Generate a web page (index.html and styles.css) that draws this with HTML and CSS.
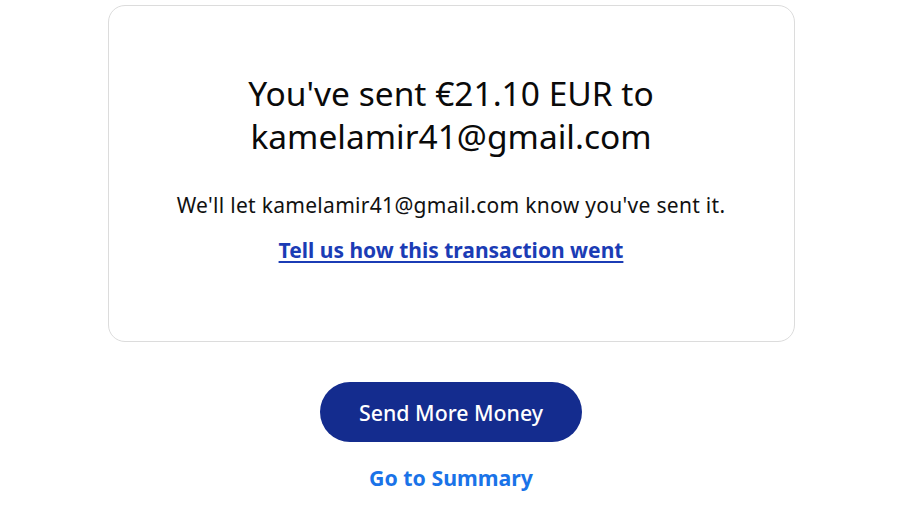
FILE: index.html
```html
<!DOCTYPE html>
<html lang="en">
<head>
<meta charset="utf-8">
<title>Money sent</title>
<link rel="stylesheet" href="styles.css">
</head>
<body>
<main class="page">
  <section class="card">
    <h1 class="title">You've sent €21.10 EUR to<br>kamelamir41@gmail.com</h1>
    <p class="note">We'll let kamelamir41@gmail.com know you've sent it.</p>
    <a class="feedback" href="#">Tell us how this transaction went</a>
  </section>
  <div class="actions">
    <a class="btn-primary" href="#">Send More Money</a>
    <a class="link-secondary" href="#">Go to Summary</a>
  </div>
</main>
</body>
</html>
```
FILE: styles.css
```css
* { box-sizing: border-box; }
html, body { margin: 0; padding: 0; background: #fff; }
body {
  font-family: "Noto Sans", "Open Sans", sans-serif;
  color: #001435;
}
.page {
  width: 902px;
  display: flex;
  flex-direction: column;
  align-items: center;
  padding-top: 5px;
}
.card {
  width: 687px;
  height: 337px;
  border: 1px solid #dcdcdc;
  border-radius: 17px;
  padding-top: 66px;
  display: flex;
  flex-direction: column;
  align-items: center;
  text-align: center;
}
.title {
  margin: 0;
  font-size: 33.5px;
  line-height: 43px;
  font-weight: 400;
  color: #0a0a0a;
}
.note {
  margin: 33px 0 0;
  font-size: 21px;
  line-height: 28px;
  letter-spacing: 0.3px;
  color: #111;
}
.feedback {
  margin-top: 17px;
  font-size: 21px;
  line-height: 28px;
  font-weight: 700;
  color: #1b3cb5;
  text-decoration: underline;
  text-underline-offset: 3px;
}
.actions {
  display: flex;
  flex-direction: column;
  align-items: center;
  margin-top: 40px;
}
.btn-primary {
  width: 262px;
  height: 60px;
  border-radius: 30px;
  background: #142c8e;
  color: #fff;
  font-size: 21.3px;
  font-weight: 500;
  text-decoration: none;
  display: flex;
  align-items: center;
  justify-content: center;
}
.link-secondary {
  margin-top: 21px;
  font-size: 21.3px;
  font-weight: 700;
  color: #1a73e8;
  text-decoration: none;
}
```
